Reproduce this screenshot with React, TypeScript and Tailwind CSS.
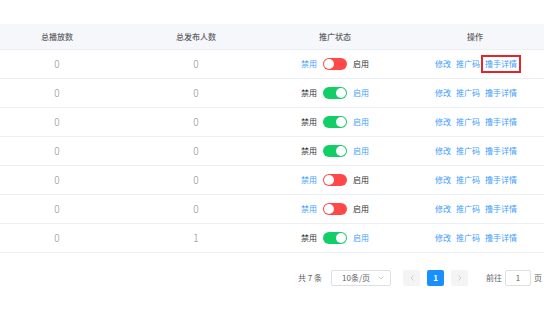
import React from 'react'

type Row = { plays: number; people: number; on: boolean }

const rows: Row[] = [
  { plays: 0, people: 0, on: false },
  { plays: 0, people: 0, on: true },
  { plays: 0, people: 0, on: true },
  { plays: 0, people: 0, on: true },
  { plays: 0, people: 0, on: false },
  { plays: 0, people: 0, on: false },
  { plays: 0, people: 1, on: true },
]

const cols = 'grid grid-cols-[114px_164px_114px_152px]'

const Switch = ({ on }: { on: boolean }) => (
  <span
    className={`relative inline-block w-[24px] h-[12px] rounded-full ${on ? 'bg-[#13ce66]' : 'bg-[#ff4949]'}`}
  >
    <span
      className={`absolute top-[1px] w-[10px] h-[10px] rounded-full bg-white ${on ? 'right-[1px]' : 'left-[1px]'}`}
    />
  </span>
)

const TableRow = ({ row, index }: { row: Row; index: number }) => (
  <div className={`${cols} h-[29px] items-center border-b border-[#ebeef5] text-[#606266]`}>
    <div className="text-center text-[10px] font-light text-[#8a8c91]">{row.plays}</div>
    <div className="text-center text-[10px] font-light text-[#8a8c91]">{row.people}</div>
    <div className="flex items-center justify-center gap-[6px]">
      <span className={row.on ? 'text-[#303133]' : 'text-[#409eff]'}>禁用</span>
      <Switch on={row.on} />
      <span className={row.on ? 'text-[#409eff]' : 'text-[#303133]'}>启用</span>
    </div>
    <div className="flex items-center justify-center gap-[5px] pl-[16px] text-[#409eff]">
      <span>修改</span>
      <span>推广码</span>
      <span className={index === 0 ? 'px-[2px] py-[3px] -mx-[4px] border-2 border-[#e3262b]' : ''}>撸手详情</span>
    </div>
  </div>
)

export default function App() {
  return (
    <div
      className="w-[550px] h-[331px] bg-white text-[8px] leading-none"
      style={{ fontFamily: '"Noto Sans CJK SC", "Noto Sans", sans-serif' }}
    >
      <div className="w-[544px] pt-[24px]">
        <div className={`${cols} h-[26px] items-center bg-[#f5f7fa] border-b border-[#ebeef5] text-[#606266] font-medium`}>
          <div className="text-center">总播放数</div>
          <div className="text-center">总发布人数</div>
          <div className="text-center">推广状态</div>
          <div className="text-center pl-[14px]">操作</div>
        </div>
        {rows.map((r, i) => (
          <TableRow key={i} row={r} index={i} />
        ))}
      </div>
      <div className="flex items-center justify-end pr-[8px] mt-[17px] text-[#606266]">
        <span className="mr-[9px]">共 7 条</span>
        <div className="flex items-center justify-between w-[60px] h-[16px] border border-[#dcdfe6] rounded-[2px] pl-[10px] pr-[6px] mr-[12px]">
          <span>10条/页</span>
          <svg width="6" height="4" viewBox="0 0 6 4" fill="none">
            <path d="M0.5 0.5 L3 3 L5.5 0.5" stroke="#c0c4cc" strokeWidth="0.8" />
          </svg>
        </div>
        <div className="flex items-center justify-center w-[17px] h-[16px] bg-[#f4f4f5] rounded-[2px]">
          <svg width="4" height="6" viewBox="0 0 4 6" fill="none">
            <path d="M3.5 0.5 L1 3 L3.5 5.5" stroke="#c0c4cc" strokeWidth="0.8" />
          </svg>
        </div>
        <div className="flex items-center justify-center w-[17px] h-[16px] bg-[#1890ff] text-white font-bold rounded-[2px] ml-[7px]">1</div>
        <div className="flex items-center justify-center w-[17px] h-[16px] bg-[#f4f4f5] rounded-[2px] ml-[7px]">
          <svg width="4" height="6" viewBox="0 0 4 6" fill="none">
            <path d="M0.5 0.5 L3 3 L0.5 5.5" stroke="#c0c4cc" strokeWidth="0.8" />
          </svg>
        </div>
        <span className="ml-[18px]">前往</span>
        <div className="flex items-center justify-center w-[26px] h-[16px] border border-[#dcdfe6] rounded-[2px] ml-[3px]">1</div>
        <span className="ml-[3px]">页</span>
      </div>
    </div>
  )
}
